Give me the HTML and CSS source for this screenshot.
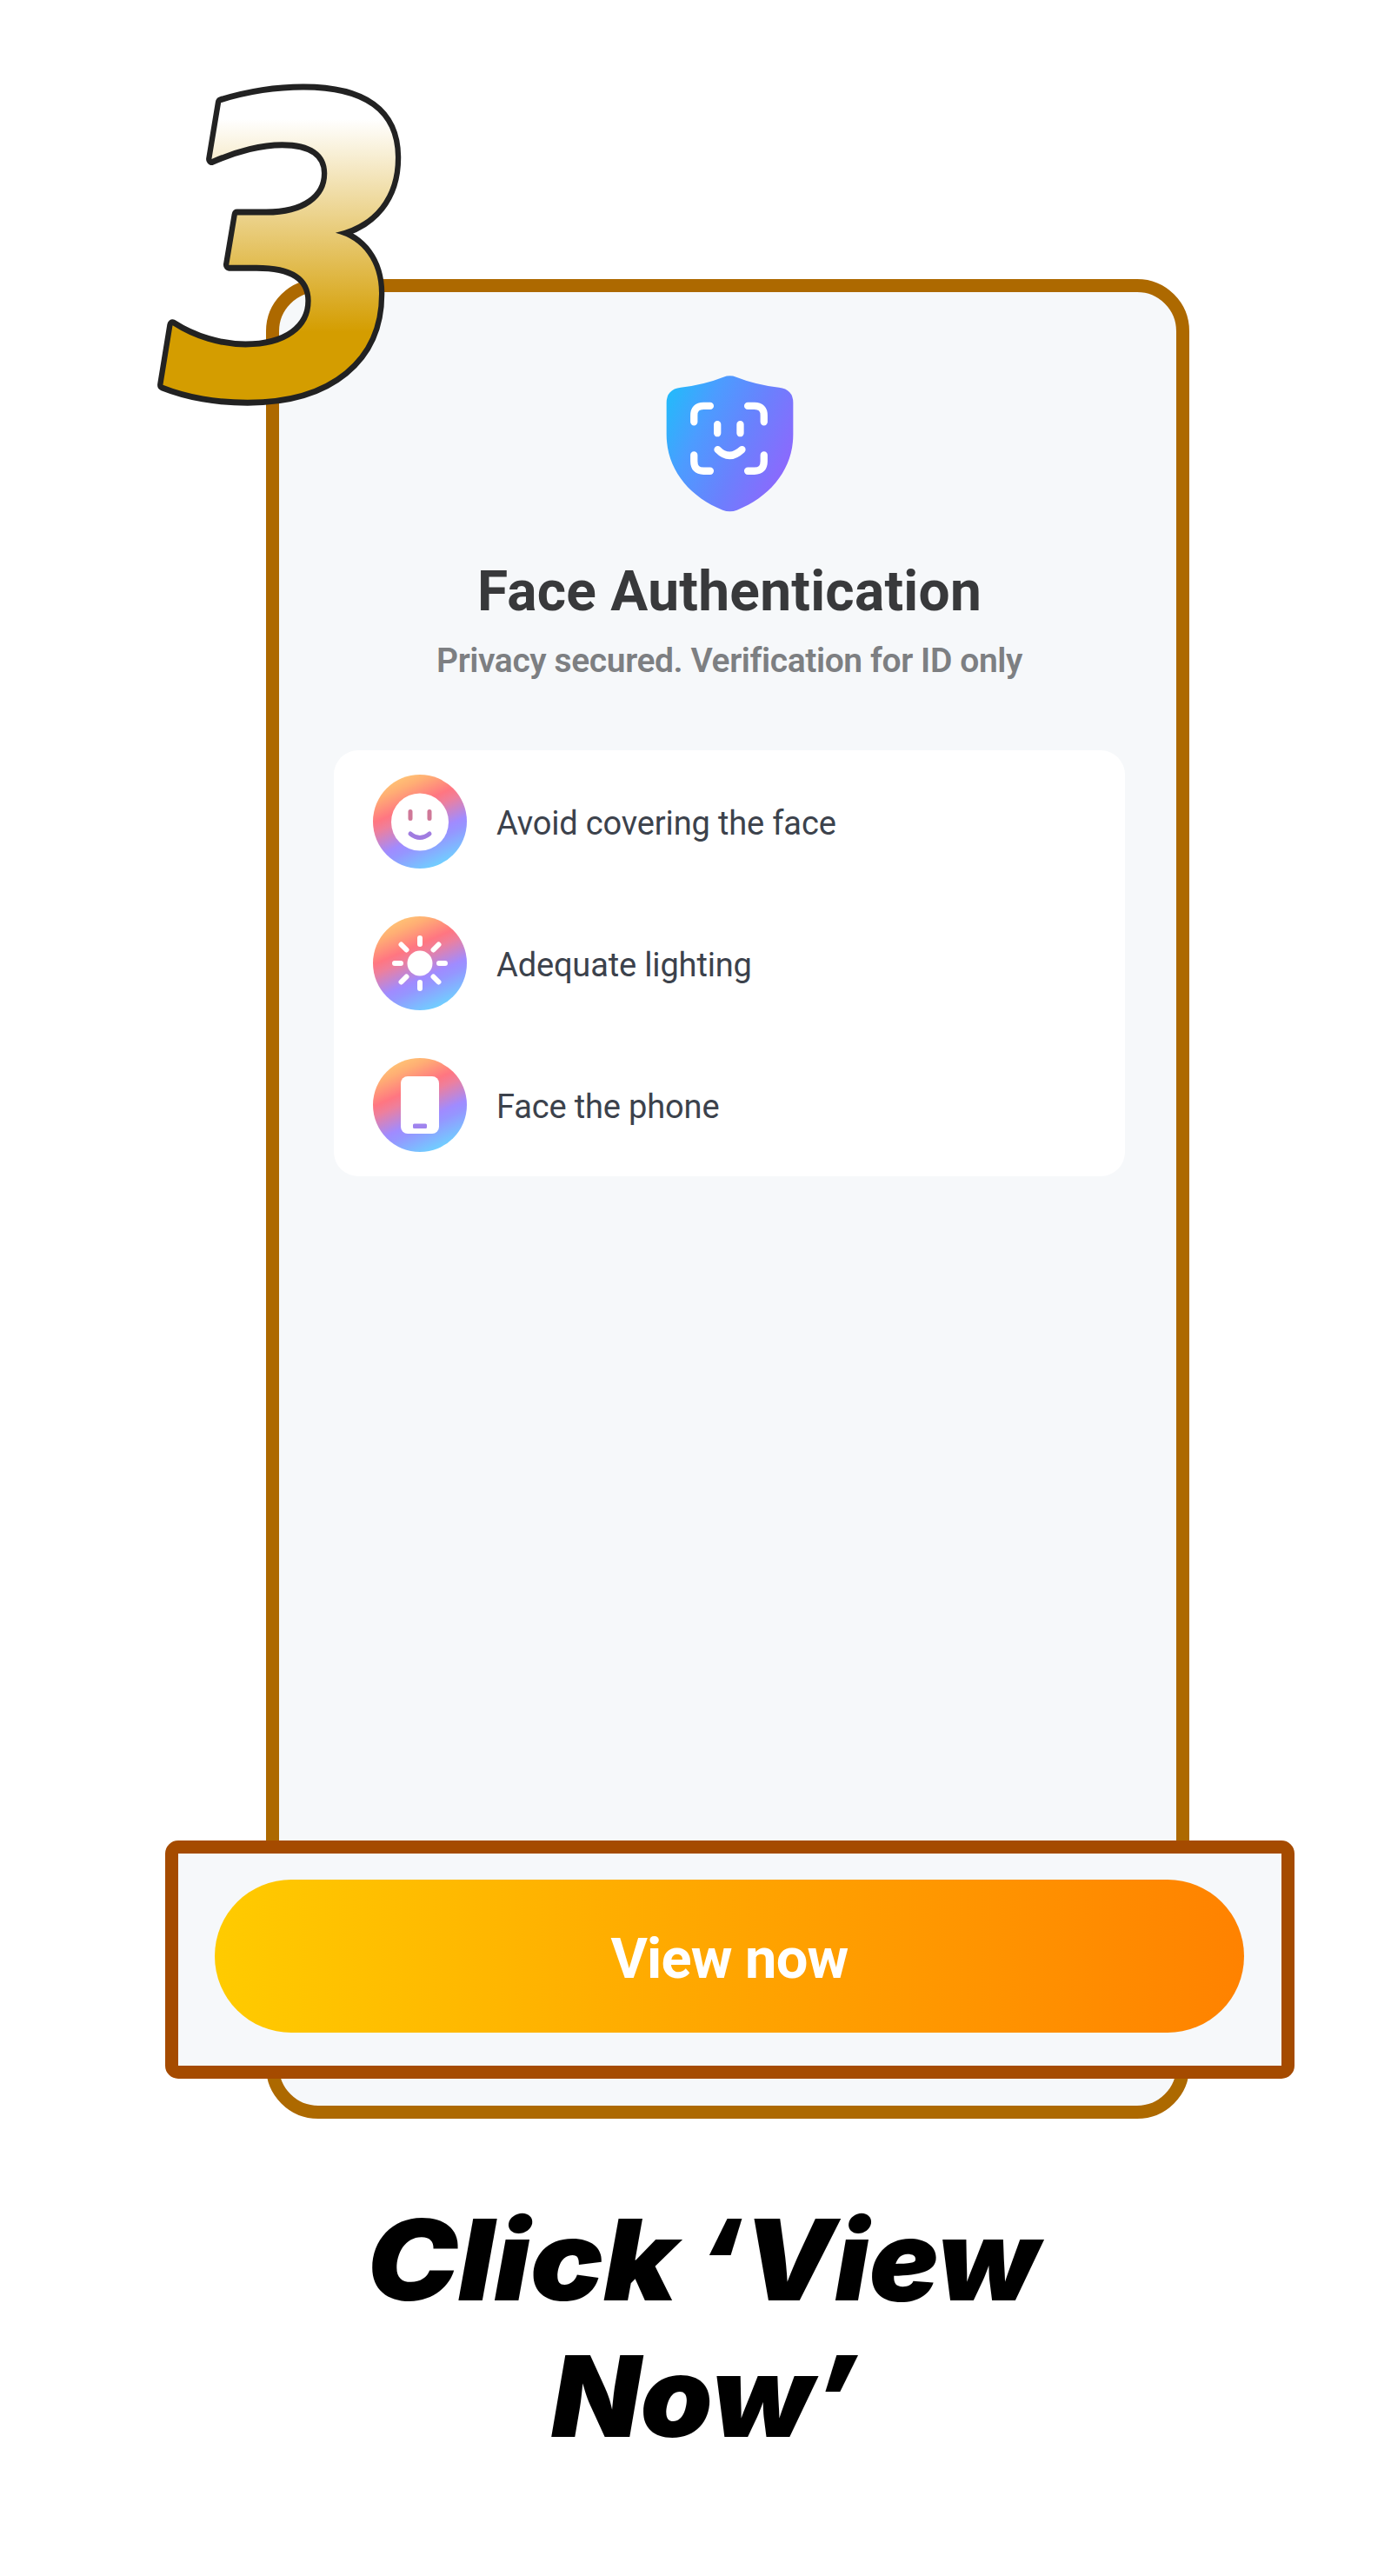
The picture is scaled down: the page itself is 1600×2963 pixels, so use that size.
FILE: index.html
```html
<!DOCTYPE html>
<html lang="en">
<head>
<meta charset="utf-8">
<title>Step 3</title>
<link rel="stylesheet" href="styles.css">
</head>
<body>
<main class="step">
  <section class="phone">
    <svg class="shield" viewBox="80 63 440 475" aria-hidden="true">
      <defs>
        <linearGradient id="shieldFill" x1="0" y1=".2" x2="1" y2=".7">
          <stop offset="0" stop-color="#26b8fb"/>
          <stop offset=".28" stop-color="#4c9cff"/>
          <stop offset=".62" stop-color="#6b80fd"/>
          <stop offset="1" stop-color="#9066fd"/>
        </linearGradient>
      </defs>
      <path fill="url(#shieldFill)" d="M278 71Q300 62 322 71Q390 98 470 107Q519 113 519 160V270C519 390 440 485 325 531Q300 540 275 531C160 485 81 390 81 270V160Q81 113 130 107Q210 98 278 71Z"/>
      <g fill="none" stroke="#fff" stroke-width="25" stroke-linecap="round">
        <path d="M176 226V204Q176 171 209 171H232M362 171H385Q418 171 418 204V226M418 341V362Q418 396 385 396H362M232 396H209Q176 396 176 362V341"/>
        <path d="M257 235V265M336 235V265M258 322Q298 363 342 322"/>
      </g>
    </svg>
    <h1 class="title">Face Authentication</h1>
    <p class="subtitle">Privacy secured. Verification for ID only</p>
    <ul class="tips">
      <li class="tip">
        <svg class="tip-icon" viewBox="0 0 108 108" aria-hidden="true">
          <defs>
            <linearGradient id="tipFill" x1=".28" y1="0" x2=".72" y2="1">
              <stop offset="0" stop-color="#ffc875"/>
              <stop offset=".13" stop-color="#ffae74"/>
              <stop offset=".33" stop-color="#ff7681"/>
              <stop offset=".42" stop-color="#ee7f9c"/>
              <stop offset=".64" stop-color="#a08bff"/>
              <stop offset=".72" stop-color="#9596ff"/>
              <stop offset="1" stop-color="#6ad8ff"/>
            </linearGradient>
          </defs>
          <circle cx="54" cy="54" r="54" fill="url(#tipFill)"/>
          <circle cx="54" cy="54.500" r="33" fill="#fff"/>
          <g fill="none" stroke-width="5" stroke-linecap="round">
            <path stroke="#cf7898" d="M43 42.500V50.500M65 42.500V50.500"/>
            <path stroke="#a07ce0" d="M43 68Q54 77 65 68"/>
          </g>
        </svg>
        <span>Avoid covering the face</span>
      </li>
      <li class="tip">
        <svg class="tip-icon" viewBox="0 0 108 108" aria-hidden="true">
          <circle cx="54" cy="54" r="54" fill="url(#tipFill)"/>
          <circle cx="54" cy="54" r="14.500" fill="#fff"/>
          <path fill="none" stroke="#fff" stroke-width="6" stroke-linecap="round" d="M54 25V32M54 76V83M25 54H32M76 54H83M32.500 32.500L38.500 38.500M69.500 69.500L75.500 75.500M75.500 32.500L69.500 38.500M38.500 69.500L32.500 75.500"/>
        </svg>
        <span>Adequate lighting</span>
      </li>
      <li class="tip">
        <svg class="tip-icon" viewBox="0 0 108 108" aria-hidden="true">
          <circle cx="54" cy="54" r="54" fill="url(#tipFill)"/>
          <rect x="32" y="21" width="44" height="66" rx="8" fill="#fff"/>
          <rect x="46" y="75.500" width="16" height="5.500" rx="1.500" fill="#a084ee"/>
        </svg>
        <span>Face the phone</span>
      </li>
    </ul>
  </section>

  <svg class="caption" viewBox="0 0 1600 360" role="img" aria-label="Click ‘View Now’">
    <text x="422" y="136" textLength="357" lengthAdjust="spacingAndGlyphs">Click</text>
    <text x="802" y="136" textLength="393" lengthAdjust="spacingAndGlyphs">‘View</text>
    <text x="634" y="293" textLength="354" lengthAdjust="spacingAndGlyphs">Now’</text>
  </svg>

  <div class="highlight">
    <button class="view-button" type="button">View now</button>
  </div>

  <svg class="step-number" viewBox="160 70 340 420" aria-label="3">
    <defs>
      <linearGradient id="gold" gradientUnits="userSpaceOnUse" x1="0" y1="137" x2="0" y2="382">
        <stop offset="0" stop-color="#fff"/>
        <stop offset="1" stop-color="#d49d00"/>
      </linearGradient>
    </defs>
    <text x="0" y="453" transform="matrix(.9 0 .01 1 183 0)" fill="url(#gold)">3</text>
  </svg>
</main>
</body>
</html>
```
FILE: styles.css
```css
* {
  box-sizing: border-box;
}

body {
  margin: 0;
  background: #fff;
  font-family: Roboto, "Liberation Sans", sans-serif;
}

.step {
  position: relative;
  width: 1600px;
  height: 2963px;
  padding-top: 321px;
}

.phone {
  display: flex;
  flex-direction: column;
  align-items: center;
  width: 1062px;
  height: 2116px;
  margin-left: 306px;
  padding: 95px 0 0 4px;
  border: 15px solid #ad6900;
  border-radius: 60px;
  background: #f6f8fa;
}

.shield {
  width: 147px;
  height: 158px;
}

.title {
  margin: 54px 0 0;
  color: #38393b;
  font-size: 64px;
  font-weight: 700;
  line-height: 76px;
  letter-spacing: .25px;
  white-space: nowrap;
}

.subtitle {
  margin: 18px 0 0;
  color: #7d7f82;
  font-size: 39px;
  font-weight: 600;
  line-height: 46px;
  letter-spacing: -.4px;
  white-space: nowrap;
}

.tips {
  display: flex;
  flex-direction: column;
  gap: 55px;
  width: 910px;
  height: 490px;
  margin: 80px 0 0;
  padding: 28px 45px;
  border-radius: 28px;
  background: #fff;
  list-style: none;
}

.tip {
  display: flex;
  align-items: center;
  gap: 34px;
  height: 108px;
  color: #3c424c;
  font-size: 38px;
  line-height: 44px;
  letter-spacing: -.15px;
  white-space: nowrap;
}

.tip span {
  padding-top: 4px;
}

.tip-icon {
  flex: none;
  width: 108px;
  height: 108px;
}

.caption {
  display: block;
  width: 1600px;
  height: 360px;
  margin-top: 73px;
  font-family: Inter, "Open Sans", sans-serif;
  font-size: 129px;
  font-style: italic;
  font-weight: 900;
}

.highlight {
  position: absolute;
  top: 2117px;
  left: 190px;
  width: 1299px;
  height: 274px;
  padding: 30px 43px 38px 42px;
  border: 15.500px solid #a54b00;
  border-radius: 15px;
  background: #f6f8fa;
}

.view-button {
  display: block;
  width: 100%;
  height: 176px;
  padding: 6px 0 0;
  border: 0;
  border-radius: 88px;
  background: linear-gradient(90deg, #ffcb00, #ffa500 50%, #ff8200);
  color: #fff;
  font-family: inherit;
  font-size: 65px;
  font-weight: 700;
  letter-spacing: -.8px;
}

.step-number {
  position: absolute;
  top: 70px;
  left: 160px;
  width: 340px;
  height: 420px;
  overflow: visible;
  stroke: #222;
  stroke-width: 14px;
  stroke-linejoin: round;
  paint-order: stroke;
  font-family: "DejaVu Sans", sans-serif;
  font-size: 471px;
  font-style: italic;
  font-weight: 700;
}
```
